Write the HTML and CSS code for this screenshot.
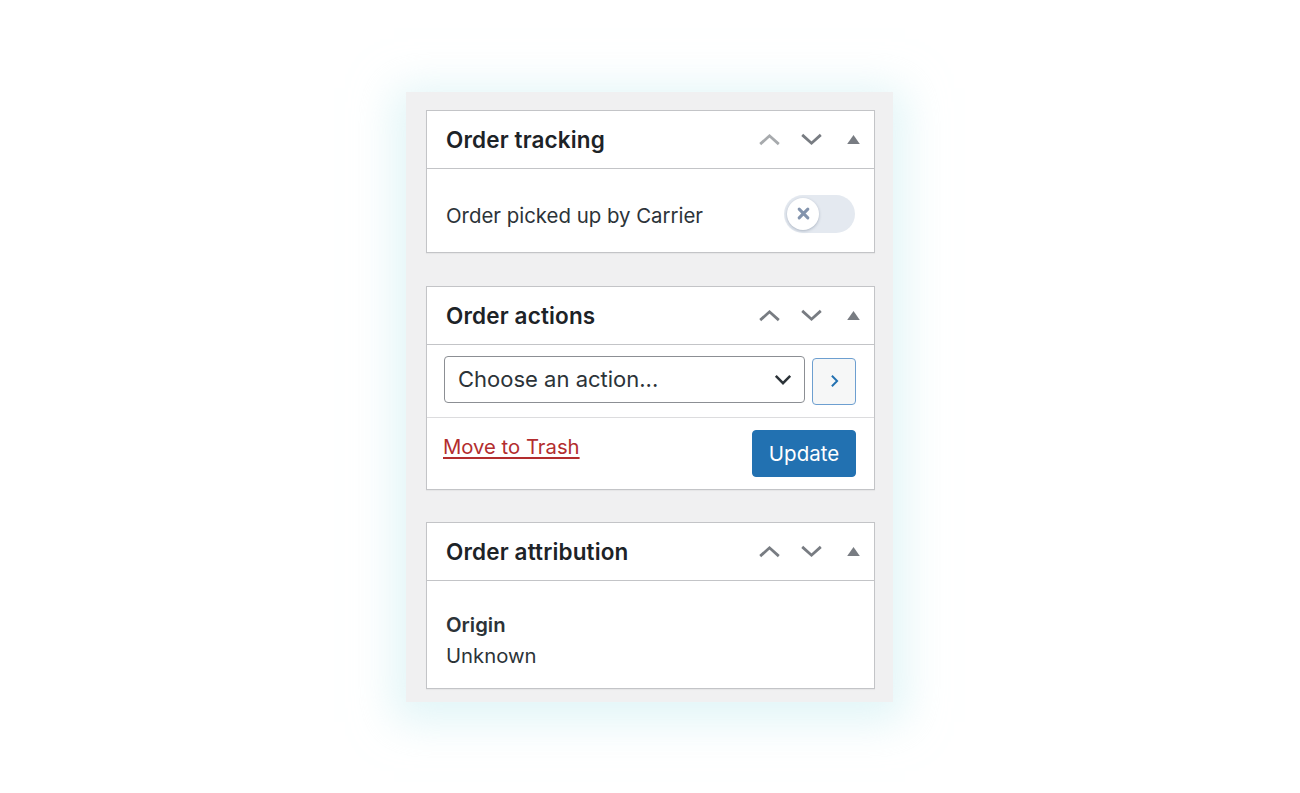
FILE: index.html
```html
<!DOCTYPE html>
<html>
<head>
<meta charset="utf-8">
<link rel="stylesheet" href="styles.css">
</head>
<body>
<div class="panel">
  <div class="box">
    <div class="box-head">
      <h2 class="title">Order tracking</h2>
      <div class="controls">
        <svg class="ctl ctl-off" viewBox="0 0 24 14"><polyline points="2,12 12,3 22,12"/></svg>
        <svg class="ctl" viewBox="0 0 24 14"><polyline points="2,2 12,11 22,2"/></svg>
        <svg class="tri" viewBox="0 0 14 10"><polygon points="7,0 14,10 0,10"/></svg>
      </div>
    </div>
    <div class="box-body tracking">
      <span class="label">Order picked up by Carrier</span>
      <span class="toggle"><span class="knob"><svg viewBox="0 0 12 12"><path d="M2 2 L10 10 M10 2 L2 10"/></svg></span></span>
    </div>
  </div>

  <div class="box box-actions">
    <div class="box-head">
      <h2 class="title">Order actions</h2>
      <div class="controls">
        <svg class="ctl" viewBox="0 0 24 14"><polyline points="2,12 12,3 22,12"/></svg>
        <svg class="ctl" viewBox="0 0 24 14"><polyline points="2,2 12,11 22,2"/></svg>
        <svg class="tri" viewBox="0 0 14 10"><polygon points="7,0 14,10 0,10"/></svg>
      </div>
    </div>
    <div class="action-row">
      <div class="select">
        <span>Choose an action...</span>
        <svg class="sel-chev" viewBox="0 0 20 12"><polyline points="2,2 10,10 18,2"/></svg>
      </div>
      <div class="go"><svg viewBox="0 0 10 16"><polyline points="2,2 8,8 2,14"/></svg></div>
    </div>
    <div class="major">
      <a class="trash" href="#">Move to Trash</a>
      <button class="update">Update</button>
    </div>
  </div>

  <div class="box box-attr">
    <div class="box-head">
      <h2 class="title">Order attribution</h2>
      <div class="controls">
        <svg class="ctl" viewBox="0 0 24 14"><polyline points="2,12 12,3 22,12"/></svg>
        <svg class="ctl" viewBox="0 0 24 14"><polyline points="2,2 12,11 22,2"/></svg>
        <svg class="tri" viewBox="0 0 14 10"><polygon points="7,0 14,10 0,10"/></svg>
      </div>
    </div>
    <div class="box-body attribution">
      <div class="origin">Origin</div>
      <div class="value">Unknown</div>
    </div>
  </div>
</div>
</body>
</html>
```

FILE: styles.css
```css
html, body {
  margin: 0;
  padding: 0;
  background: #ffffff;
}
body {
  height: 100vh;
  display: flex;
  align-items: center;
  justify-content: center;
  font-family: Inter, "Liberation Sans", sans-serif;
  color: #1d2327;
}
.panel {
  width: 449px;
  padding: 18px 18px 13px 20px;
  margin-left: -1px;
  background: #f0f0f1;
  display: flex;
  flex-direction: column;
  box-shadow: 0 8px 40px 12px rgba(200, 236, 240, 0.55);
}
.box {
  background: #fff;
  border: 1px solid #c3c4c7;
  box-shadow: 0 1px 1px rgba(0,0,0,0.04);
}
.box-actions { margin-top: 33px; }
.box-attr { margin-top: 32px; }
.box-head {
  height: 57px;
  border-bottom: 1px solid #c3c4c7;
  display: flex;
  align-items: center;
  justify-content: space-between;
  padding: 0 14px 0 19px;
}
.title {
  margin: 0;
  font-size: 22.5px;
  font-weight: 600;
  color: #1d2327;
  letter-spacing: 0.15px;
}
.controls {
  display: flex;
  align-items: center;
}
.ctl {
  width: 23px;
  height: 13px;
  fill: none;
  stroke: #787c82;
  stroke-width: 3;
  margin-left: 19px;
}
.ctl-off { stroke: #a7aaad; }
.tri {
  width: 13px;
  height: 9px;
  fill: #787c82;
  margin-left: 24px;
}
.tracking {
  display: flex;
  align-items: center;
  justify-content: space-between;
  padding: 26px 19px 19px 19px;
}
.label {
  font-size: 20.4px;
  color: #2c3338;
  margin-top: 4px;
}
.toggle {
  width: 71px;
  height: 38px;
  border-radius: 19px;
  background: #e4e9f0;
  display: flex;
  align-items: center;
  padding-left: 3px;
  box-sizing: border-box;
}
.knob {
  width: 32px;
  height: 32px;
  border-radius: 50%;
  background: #fff;
  box-shadow: 0 1px 3px rgba(40, 60, 90, 0.3);
  display: flex;
  align-items: center;
  justify-content: center;
}
.knob svg {
  width: 13px;
  height: 13px;
  fill: none;
  stroke: #8394ad;
  stroke-width: 2.8;
  stroke-linecap: round;
}
.action-row {
  display: flex;
  align-items: flex-start;
  gap: 7px;
  padding: 11px 18px 12px 17px;
  border-bottom: 1px solid #dcdcde;
}
.select {
  flex: 1;
  height: 45px;
  border: 1px solid #8c8f94;
  border-radius: 4px;
  display: flex;
  align-items: center;
  justify-content: space-between;
  padding: 0 12px 0 13px;
  font-size: 22px;
  color: #2c3338;
}
.sel-chev {
  width: 18px;
  height: 11px;
  fill: none;
  stroke: #2c3338;
  stroke-width: 2.8;
}
.go {
  width: 42px;
  height: 45px;
  margin-top: 2px;
  border: 1px solid #6d9fd0;
  border-radius: 4px;
  background: #f6f7f7;
  display: flex;
  align-items: center;
  justify-content: center;
}
.go svg {
  width: 9px;
  height: 14px;
  fill: none;
  stroke: #2271b1;
  stroke-width: 2.2;
}
.major {
  display: flex;
  align-items: center;
  justify-content: space-between;
  padding: 12px 18px 12px 16px;
}
.trash {
  color: #b32d2e;
  font-size: 20.3px;
  text-decoration: underline;
  text-underline-offset: 3px;
  margin-top: -13px;
}
.update {
  height: 47px;
  width: 104px;
  padding: 0;
  background: #2271b1;
  border: 1px solid #2271b1;
  border-radius: 4px;
  color: #fff;
  font-family: Inter, "Liberation Sans", sans-serif;
  font-size: 20.5px;
}
.attribution {
  padding: 28px 19px 17px 19px;
}
.origin {
  font-size: 20.3px;
  font-weight: 600;
  line-height: 31px;
  color: #2c3338;
}
.value {
  font-size: 20.3px;
  line-height: 31px;
  color: #2c3338;
}
```
